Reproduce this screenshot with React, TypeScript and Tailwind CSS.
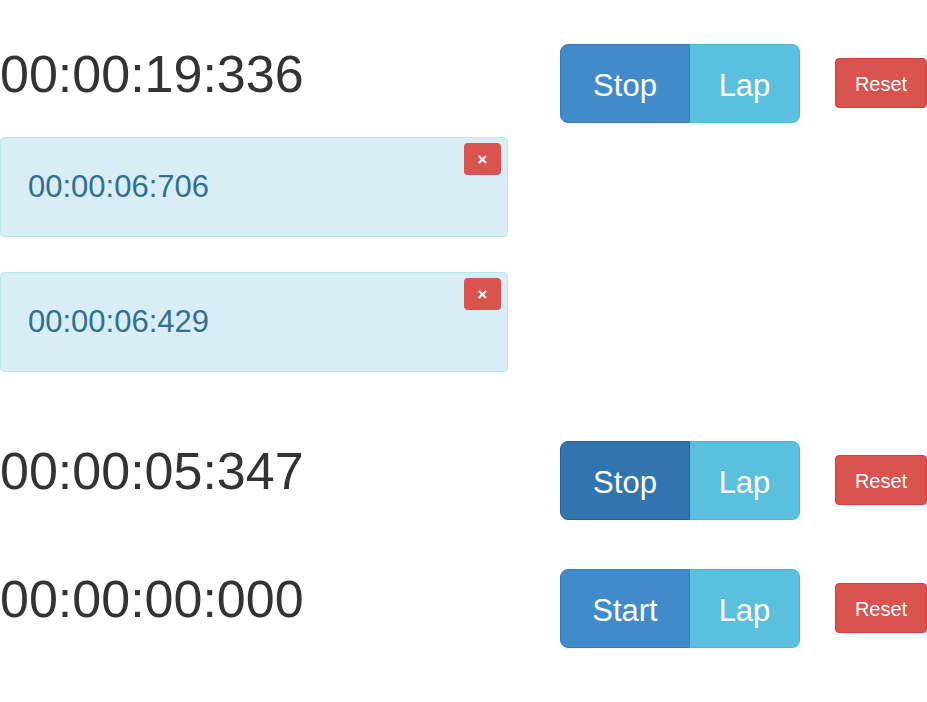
import { useState } from "react"

type Timer = {
  time: string
  running: boolean
  active?: boolean
  laps: string[]
}

const timers: Timer[] = [
  { time: "00:00:19:336", running: true, laps: ["00:00:06:706", "00:00:06:429"] },
  { time: "00:00:05:347", running: true, active: true, laps: [] },
  { time: "00:00:00:000", running: false, laps: [] },
]

function StopwatchRow({ timer }: { timer: Timer }) {
  const [laps, setLaps] = useState(timer.laps)

  return (
    <div className="flex flex-col">
      <div className="flex items-start h-[79px]">
        <div className="w-[560px] mt-[4px] text-[52px] leading-none text-[#333333]">{timer.time}</div>
        <div className="flex h-[79px] text-[31px] text-white">
          <button
            className={`w-[130px] h-full pt-[5px] border ${
              timer.active ? "bg-[#3174b0] border-[#285e8e]" : "bg-[#428bca] border-[#357ebd]"
            } rounded-l-[8px]`}
          >
            {timer.running ? "Stop" : "Start"}
          </button>
          <button className="w-[110px] h-full pt-[5px] bg-[#5bc0de] border border-[#46b8da] border-l-0 rounded-r-[8px]">
            Lap
          </button>
        </div>
        <button className="ml-[35px] mt-[14px] w-[92px] h-[50px] pt-[2px] rounded-[4px] bg-[#d9534f] border border-[#d43f3a] text-[20px] text-white">
          Reset
        </button>
      </div>
      {laps.length > 0 && (
        <div className="flex flex-col gap-[35px] mt-[14px]">
          {laps.map((lap, i) => (
            <div
              key={i}
              className="relative w-[508px] h-[100px] flex items-center pl-[27px] pt-[1px] rounded-[4px] bg-[#d9edf7] border border-[#bce8f1] text-[31px] text-[#31708f]"
            >
              {lap}
              <button
                onClick={() => setLaps(laps.filter((_, j) => j !== i))}
                className="absolute top-[5px] right-[6px] w-[37px] h-[32px] rounded-[4px] bg-[#d9534f] text-white text-[17px] font-bold leading-none"
              >
                ×
              </button>
            </div>
          ))}
        </div>
      )}
    </div>
  )
}

export default function App() {
  return (
    <div className="min-h-screen bg-white pt-[44px] font-['Liberation_Sans',Arial,sans-serif]">
      <StopwatchRow timer={timers[0]} />
      <div className="mt-[69px]">
        <StopwatchRow timer={timers[1]} />
      </div>
      <div className="mt-[49px]">
        <StopwatchRow timer={timers[2]} />
      </div>
    </div>
  )
}
